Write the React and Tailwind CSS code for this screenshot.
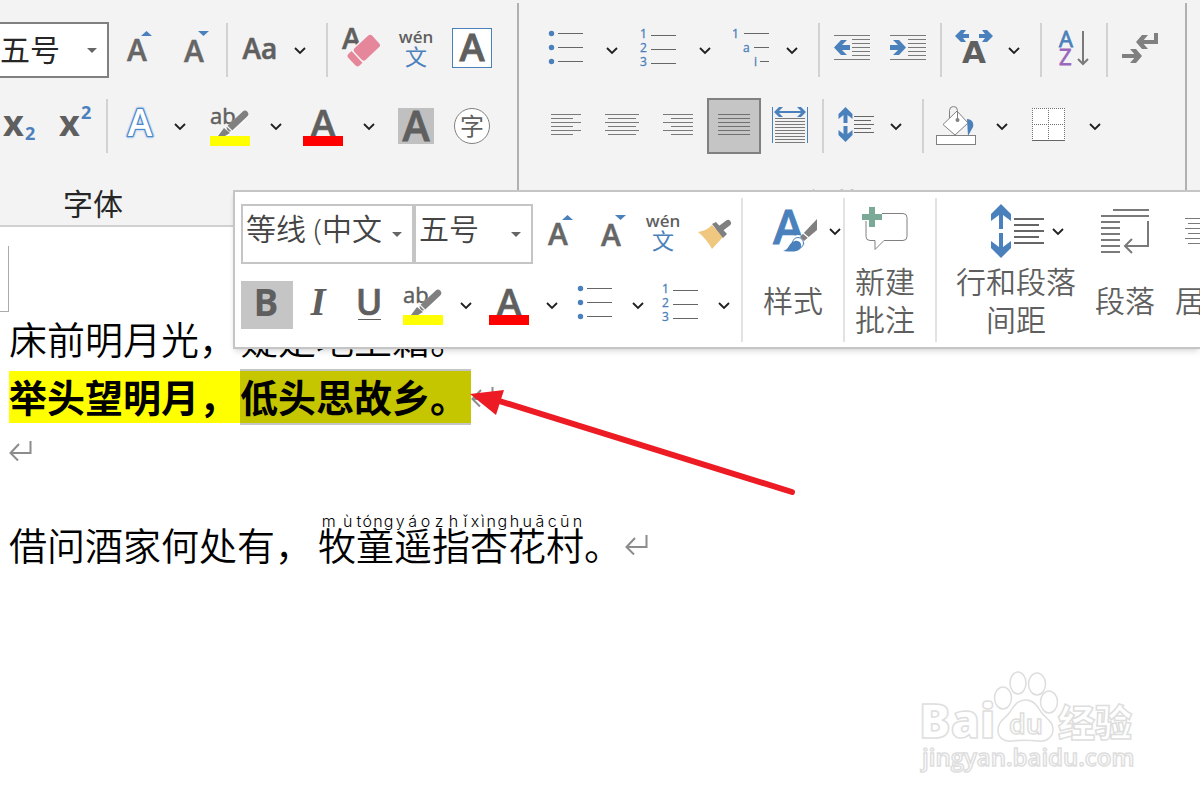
import React, { useState } from "react";

const latin = "'Open Sans', 'Noto Sans', 'Noto Sans CJK SC', sans-serif";

const Icon = ({ w = 40, h = 44, children }) => (
  <svg
    width={w}
    height={h}
    viewBox={`0 0 ${w} ${h}`}
    fill="none"
    className="block shrink-0 overflow-visible"
    fontFamily={latin}
    aria-hidden="true"
  >
    {children}
  </svg>
);

// horizontal strokes, each entry is [x1, x2, y]
const Lines = ({ rows, color = "#7a7a7a", width = 1 }) => (
  <g stroke={color} strokeWidth={width}>
    {rows.map(([a, b, y]) => (
      <line key={y} x1={a} x2={b} y1={y} y2={y} />
    ))}
  </g>
);

const Chevron = () => (
  <svg width="12" height="12" viewBox="0 0 12 12" fill="none" className="block shrink-0" aria-hidden="true">
    <path d="M1 4l5 5 5-5" stroke="#1f1f1f" strokeWidth="1.8" />
  </svg>
);

const Btn = ({ label, className = "", children }) => (
  <button type="button" aria-label={label} title={label} className={`shrink-0 ${className}`}>
    {children}
  </button>
);

const More = ({ label, className = "" }) => (
  <Btn label={label} className={className}>
    <Chevron />
  </Btn>
);

const Sep = ({ className = "" }) => <div className={`w-0.5 h-[54px] shrink-0 bg-[#d2d2d2] ${className}`} />;

const Picker = ({ label, options, className, selectClass }) => {
  const [value, setValue] = useState(options[0]);
  return (
    <div className={`relative shrink-0 ${className}`}>
      <select
        aria-label={label}
        value={value}
        onChange={(e) => setValue(e.target.value)}
        className={`block w-full h-full appearance-none bg-white border-2 text-[30px] leading-9 outline-none ${selectClass}`}
      >
        {options.map((o) => (
          <option key={o}>{o}</option>
        ))}
      </select>
      <svg width="10" height="6" viewBox="0 0 10 6" className="absolute right-3 top-1/2 -mt-0.5 pointer-events-none" aria-hidden="true">
        <path d="M0 0h10L5 5z" fill="#666" />
      </svg>
    </div>
  );
};

const GrowIcon = () => (
  <Icon>
    <text x="8" y="33" fontSize="30" fontWeight="600" fill="#666" stroke="#666" strokeWidth="0.500">A</text>
    <path d="M22 8l5.500-5 5.500 5z" fill="#4a80bb" />
  </Icon>
);

const ShrinkIcon = () => (
  <Icon>
    <text x="8" y="34" fontSize="30" fontWeight="600" fill="#666" stroke="#666" strokeWidth="0.500">A</text>
    <path d="M22 3l5.500 5 5.500-5z" fill="#4a80bb" />
  </Icon>
);

const PinyinIcon = () => (
  <Icon>
    <text x="20" y="15" fontSize="17" fontWeight="600" fill="#5f5f5f" textAnchor="middle">wén</text>
    <text x="20" y="37" fontSize="22" fontWeight="400" fill="#4a80bb" textAnchor="middle">文</text>
  </Icon>
);

const HighlightIcon = () => (
  <Icon>
    <text x="0" y="20" fontSize="22" fontWeight="400" fill="#5f5f5f" stroke="#5f5f5f" strokeWidth="0.500">ab</text>
    <path d="M36 10L10 34" stroke="#fff" strokeWidth="8" opacity="0.600" />
    <path d="M35 10L20 24" stroke="#808080" strokeWidth="6.500" strokeLinecap="round" />
    <path d="M14 24l6 5-5 3H8z" fill="#808080" />
    <path d="M15 20l7 7" stroke="#f3f3f3" strokeWidth="1.200" />
    <rect y="32" width="40" height="10" fill="#ff0" />
  </Icon>
);

const FontColorIcon = () => (
  <Icon>
    <text x="20" y="33" fontSize="38" fontWeight="600" fill="#5f5f5f" stroke="#5f5f5f" strokeWidth="0.600" textAnchor="middle">A</text>
    <rect y="32" width="40" height="10" fill="#f00" />
  </Icon>
);

const BulletIcon = () => (
  <Icon>
    {[5.5, 19.5, 33.5].map((y) => (
      <circle key={y} cx="5.500" cy={y} r="2.700" fill="#4a80bb" />
    ))}
    <Lines color="#666" rows={[[12, 37, 5.5], [12, 37, 19.5], [12, 37, 33.5]]} />
  </Icon>
);

const NumberIcon = () => (
  <Icon>
    <g fontSize="12" fontWeight="400" fill="#4a80bb" stroke="#4a80bb" strokeWidth="0.300">
      <text x="1" y="10">1</text>
      <text x="1" y="24">2</text>
      <text x="1" y="38">3</text>
    </g>
    <Lines color="#666" rows={[[12, 37, 7.5], [12, 37, 21.5], [12, 37, 35.5]]} />
  </Icon>
);

const alignRows = (long, short) => [10.5, 14.5, 18.5, 22.5, 26.5, 30.5].map((y, i) => [...(i % 2 ? short : long), y]);

const ReturnMark = ({ className = "" }) => (
  <svg width="24" height="20" viewBox="0 0 24 20" fill="none" stroke="#8c8c8c" strokeWidth="2" className={`inline-block shrink-0 ${className}`} aria-hidden="true">
    <path d="M21.500 0v12H2M10 3L1.500 12 9 19.500" />
  </svg>
);

const FontGroup = () => (
  <section aria-label="字体" className="w-[519px] shrink-0 border-r-2 border-[#b0b0b0] mt-[3px] pt-[19px]">
    <div className="flex items-center h-14">
      <Picker
        label="字号"
        options={["五号", "小四", "四号"]}
        className="w-[109px] h-full"
        selectClass="border-l-0 border-[#808080] text-[#262626]"
      />
      <Btn label="增大字号" className="ml-2.5"><GrowIcon /></Btn>
      <Btn label="减小字号" className="ml-[17px]"><ShrinkIcon /></Btn>
      <Sep className="ml-2.5" />
      <Btn label="更改大小写" className="ml-3">
        <Icon>
          <text x="20" y="31" fontSize="28" fontWeight="600" fill="#5f5f5f" stroke="#5f5f5f" strokeWidth="0.600" textAnchor="middle">Aa</text>
        </Icon>
      </Btn>
      <More label="更改大小写选项" className="ml-3.5" />
      <Sep className="ml-5" />
      <Btn label="清除格式" className="ml-3">
        <Icon>
          <text x="2" y="21" fontSize="29" fontWeight="600" fill="#5f5f5f" stroke="#5f5f5f" strokeWidth="0.500">A</text>
          <g transform="translate(26.500 20) rotate(-43)" fill="#e5869a">
            <rect x="-13" y="-9.500" width="26" height="19" fill="#f3f3f3" />
            <rect x="-11.500" y="-8" width="24" height="16" rx="3" />
            <path d="M-13-8v16h-4a3 3 0 0 1-3-3V-5a3 3 0 0 1 3-3z" />
          </g>
        </Icon>
      </Btn>
      <Btn label="拼音指南" className="ml-4"><PinyinIcon /></Btn>
      <Btn label="字符边框" className="ml-4">
        <Icon>
          <rect x="0.500" y="0.500" width="39" height="39" fill="#fff" stroke="#4a80bb" />
          <text x="20" y="33" fontSize="38" fontWeight="600" fill="#5f5f5f" stroke="#5f5f5f" strokeWidth="0.800" textAnchor="middle">A</text>
        </Icon>
      </Btn>
    </div>
    <div className="flex items-center h-14 mt-5">
      <Btn label="下标">
        <Icon>
          <text x="3" y="32" fontSize="36" fontWeight="700" fill="#5f5f5f">x</text>
          <text x="25" y="36" fontSize="18" fontWeight="700" fill="#4a80bb">2</text>
        </Icon>
      </Btn>
      <Btn label="上标" className="ml-4">
        <Icon>
          <text x="3" y="32" fontSize="36" fontWeight="700" fill="#5f5f5f">x</text>
          <text x="25" y="15" fontSize="18" fontWeight="700" fill="#4a80bb">2</text>
        </Icon>
      </Btn>
      <Sep className="ml-2.5" />
      <Btn label="文本效果" className="ml-3">
        <Icon>
          <g fontSize="37" fontWeight="600" textAnchor="middle" strokeLinejoin="round">
            <text x="20" y="32" stroke="#cfe0f2" strokeWidth="5">A</text>
            <text x="20" y="32" stroke="#4a86c8" strokeWidth="2.500">A</text>
            <text x="20" y="32" fill="#fff">A</text>
          </g>
        </Icon>
      </Btn>
      <More label="文本效果选项" className="ml-3.5" />
      <Btn label="突出显示" className="ml-6"><HighlightIcon /></Btn>
      <More label="突出显示颜色" className="ml-5" />
      <Btn label="字体颜色" className="ml-[21px]"><FontColorIcon /></Btn>
      <More label="更多字体颜色" className="ml-5" />
      <Btn label="字符底纹" className="ml-[21px]">
        <Icon>
          <rect x="2" y="4" width="36" height="36" fill="#c0c0c0" />
          <text x="20" y="37" fontSize="41" fontWeight="600" fill="#5f5f5f" stroke="#5f5f5f" strokeWidth="0.800" textAnchor="middle">A</text>
        </Icon>
      </Btn>
      <Btn label="带圈字符" className="ml-4">
        <Icon>
          <circle cx="20" cy="22" r="17.500" fill="#fff" stroke="#808080" />
          <text x="20" y="31" fontSize="24" fill="#5f5f5f" textAnchor="middle">字</text>
        </Icon>
      </Btn>
    </div>
    <div className="mt-[30px] pl-[63px] text-[30px] leading-10">字体</div>
  </section>
);

const ParagraphGroup = () => (
  <section aria-label="段落" className="w-[668px] shrink-0 border-r-2 border-[#b0b0b0] mt-[3px] pt-[19px]">
    <div className="flex items-center h-14 pl-[27px]">
      <Btn label="项目符号"><BulletIcon /></Btn>
      <More label="项目符号库" className="ml-5" />
      <Btn label="编号" className="ml-[21px]"><NumberIcon /></Btn>
      <More label="编号库" className="ml-5" />
      <Btn label="多级列表" className="ml-5">
        <Icon>
          <g fontSize="12" fill="#4a80bb" stroke="#4a80bb" strokeWidth="0.300">
            <text x="1" y="10">1</text>
            <text x="12" y="24">a</text>
            <text x="23" y="38">i</text>
          </g>
          <Lines color="#666" rows={[[13, 38, 5.5], [23, 38, 19.5], [29, 38, 33.5]]} />
        </Icon>
      </Btn>
      <More label="多级列表库" className="ml-[15px]" />
      <Sep className="ml-5" />
      <Btn label="减少缩进量" className="ml-3">
        <Icon>
          <Lines rows={[[2, 38, 7.5], [20, 38, 11.5], [20, 38, 15.5], [20, 38, 19.5], [20, 38, 23.5], [20, 38, 27.5], [2, 38, 31.5]]} />
          <path d="M2 19.500L9 12h6l-5 5h8v5h-8l5 5H9z" fill="#4a80bb" />
        </Icon>
      </Btn>
      <Btn label="增加缩进量" className="ml-4">
        <Icon>
          <Lines rows={[[2, 38, 7.5], [20, 38, 11.5], [20, 38, 15.5], [20, 38, 19.5], [20, 38, 23.5], [20, 38, 27.5], [2, 38, 31.5]]} />
          <path d="M18 19.500L11 12H5l5 5H2v5h8l-5 5h6z" fill="#4a80bb" />
        </Icon>
      </Btn>
      <Sep className="ml-3" />
      <Btn label="中文版式" className="ml-3">
        <Icon>
          <path d="M1 8l6-6h5L9 6h6v4H9l3 4H7zM39 8l-6-6h-5l3 4h-6v4h6l-3 4h5z" fill="#4a80bb" />
          <text x="20" y="35" fontSize="31" fontWeight="700" fill="#5f5f5f" textAnchor="middle" fontFamily="'DejaVu Sans', sans-serif">A</text>
        </Icon>
      </Btn>
      <More label="中文版式选项" className="ml-3.5" />
      <Sep className="ml-5" />
      <Btn label="排序" className="ml-3">
        <Icon>
          <text x="5" y="19" fontSize="22" fill="#4a80bb" stroke="#4a80bb" strokeWidth="0.800">A</text>
          <text x="5" y="37" fontSize="22" fill="#9966bb" stroke="#9966bb" strokeWidth="0.800">Z</text>
          <path d="M29 3v32M24 31l5 5 5-5" stroke="#7a7a7a" strokeWidth="2" />
        </Icon>
      </Btn>
      <Sep className="ml-3" />
      <Btn label="显示编辑标记" className="ml-3">
        <Icon>
          <path d="M36 5v9H20M2 28h18" stroke="#808080" strokeWidth="4" />
          <path d="M16 14l6-7h6l-6 7 6 7h-6zM22 28l-6-7h-6l6 7-6 7h6z" fill="#808080" />
        </Icon>
      </Btn>
    </div>
    <div className="flex items-center h-14 mt-5 pl-[27px]">
      <Btn label="左对齐"><Icon><Lines rows={alignRows([5, 35], [5, 27])} /></Icon></Btn>
      <Btn label="居中" className="ml-4"><Icon><Lines rows={alignRows([3, 37], [6, 34])} /></Icon></Btn>
      <Btn label="右对齐" className="ml-4"><Icon><Lines rows={alignRows([5, 35], [13, 35])} /></Icon></Btn>
      <Btn label="两端对齐" className="ml-[9px] flex items-center justify-center w-[54px] h-14 border-2 border-[#808080] bg-[#c5c5c5]">
        <Icon><Lines color="#707070" rows={alignRows([4, 36], [4, 36])} /></Icon>
      </Btn>
      <Btn label="分散对齐" className="ml-[9px]">
        <Icon>
          <path d="M2.500 3v36M37.500 3v36" stroke="#4a80bb" />
          <path d="M6 8h28" stroke="#4a80bb" strokeWidth="2" />
          <path d="M4 8l5-5h4L8 8l5 5H9zM36 8l-5-5h-4l5 5-5 5h4z" fill="#4a80bb" />
          <Lines rows={[14.5, 17.5, 20.5, 23.5, 26.5, 29.5, 32.5, 35.5, 38.5].map((y) => [5, 35, y])} />
        </Icon>
      </Btn>
      <Sep className="ml-3" />
      <Btn label="行和段落间距" className="ml-3">
        <Icon>
          <path d="M9.500 3l7 7v5l-5-4v8h-4v-8l-5 4v-5zM9.500 38l7-7v-5l-5 4v-8h-4v8l-5-4v5z" fill="#4a80bb" />
          <Lines color="#666" rows={[[18, 38, 12.5], [18, 35, 16.5], [18, 38, 20.5], [18, 35, 24.5], [18, 38, 28.5]]} />
        </Icon>
      </Btn>
      <More label="间距选项" className="ml-3.5" />
      <Sep className="ml-5" />
      <Btn label="底纹" className="ml-3">
        <Icon>
          <path d="M31 15c5 0 7 4 6 8l-5 9z" fill="#4a80bb" />
          <path d="M21 7l11 12-13 12L7 20.500z" fill="#fff" stroke="#808080" />
          <path d="M13.500 14V6.500a4 4 0 0 1 8 0V16" stroke="#808080" />
          <circle cx="21.500" cy="16" r="2" fill="#808080" />
          <rect x="0.500" y="31.500" width="39" height="9" fill="#fff" stroke="#808080" />
        </Icon>
      </Btn>
      <More label="底纹颜色" className="ml-5" />
      <Btn label="边框" className="ml-5">
        <Icon>
          <rect x="4" y="4" width="33" height="33" fill="#fff" />
          <path d="M4 4.500h33M4 20.500h33M4.500 4v33M20.500 4v33M36.500 4v33" stroke="#707070" strokeDasharray="1 1" />
          <path d="M4 36.500h33" stroke="#666" />
        </Icon>
      </Btn>
      <More label="边框选项" className="ml-[21px]" />
    </div>
    <div className="mt-[30px] pr-10 text-center text-[30px] leading-10">段落</div>
  </section>
);

const BigButton = ({ icon, lines, className = "", iconClass = "justify-center" }) => (
  <button type="button" className={`shrink-0 pt-[11px] text-[#5f5f5f] ${className}`}>
    <span className={`flex items-center h-14 ${iconClass}`}>{icon}</span>
    <span className="flex flex-col items-center justify-center h-[76px] mt-1 text-[30px] leading-[38px] whitespace-nowrap">
      {lines.map((l) => (
        <span key={l}>{l}</span>
      ))}
    </span>
  </button>
);

const BigSep = () => <div className="w-0.5 h-36 shrink-0 self-center bg-[#e1e1e6]" />;

const MiniToolbar = () => (
  <div
    role="toolbar"
    aria-label="浮动工具栏"
    className="absolute left-[233px] right-0 top-[190px] flex items-start overflow-hidden bg-white border-2 border-r-0 border-[#c5c5c5] shadow-md font-[350]"
  >
    <div className="shrink-0 w-[506px] pl-1.5 pt-3 pb-[18px]">
      <div className="flex items-center">
        <Picker
          label="字体"
          options={["等线 (中文正文)", "宋体", "黑体"]}
          className="w-[173px] h-[60px]"
          selectClass="border-[#c5c5c5] text-[#444] pl-[3px] pr-[31px] pb-2.5"
        />
        <Picker
          label="浮动字号"
          options={["五号", "小四", "四号"]}
          className="w-[119px] h-[60px]"
          selectClass="border-[#c5c5c5] text-[#444] pl-[3px] pb-2.5"
        />
        <Btn label="增大字号" className="ml-[7px]"><GrowIcon /></Btn>
        <Btn label="减小字号" className="ml-[13px]"><ShrinkIcon /></Btn>
        <Btn label="拼音指南" className="ml-2.5"><PinyinIcon /></Btn>
        <Btn label="格式刷" className="ml-3">
          <Icon>
            <path d="M3 20c6-1 10-3 14-7l11 12-11 12C13 30 9 25 3 20z" fill="#efc77f" />
            <path d="M17 12l4-2 11 12-4 4z" fill="#808080" />
            <path d="M25 17l8-6" stroke="#808080" strokeWidth="6" strokeLinecap="round" />
          </Icon>
        </Btn>
      </div>
      <div className="flex items-center h-12 mt-[17px]">
        <Btn label="加粗" className="flex items-center justify-center w-[52px] h-12 bg-[#c5c5c5]">
          <Icon>
            <text x="19" y="33" fontSize="37" fontWeight="700" fill="#5f5f5f" textAnchor="middle">B</text>
          </Icon>
        </Btn>
        <Btn label="倾斜" className="ml-[5px]">
          <Icon>
            <text x="20" y="32" fontSize="39" fontWeight="700" fontStyle="italic" fontFamily="'Liberation Serif', serif" fill="#5f5f5f" textAnchor="middle">I</text>
          </Icon>
        </Btn>
        <Btn label="下划线" className="ml-3">
          <Icon>
            <text x="19" y="32" fontSize="36" fontWeight="600" fill="#5f5f5f" stroke="#5f5f5f" strokeWidth="0.600" textAnchor="middle">U</text>
            <path d="M8 36.500h23" stroke="#5f5f5f" />
          </Icon>
        </Btn>
        <Btn label="突出显示" className="ml-[13px]"><HighlightIcon /></Btn>
        <More label="突出显示颜色" className="ml-[17px]" />
        <Btn label="字体颜色" className="ml-[17px]"><FontColorIcon /></Btn>
        <More label="更多字体颜色" className="ml-[17px]" />
        <Btn label="项目符号" className="ml-[17px]"><BulletIcon /></Btn>
        <More label="项目符号库" className="ml-[17px]" />
        <Btn label="编号" className="ml-[17px]"><NumberIcon /></Btn>
        <More label="编号库" className="ml-[17px]" />
      </div>
    </div>
    <BigSep />
    <BigButton
      className="w-[100px]"
      iconClass="justify-end gap-3 pr-0.5"
      lines={["样式"]}
      icon={
        <>
          <Icon w={44} h={56}>
            <text x="0" y="41" fontSize="47" fontWeight="600" fill="#4a80bb" stroke="#4a80bb" strokeWidth="0.800">A</text>
            <circle cx="25" cy="39" r="7" fill="#fff" />
            <path d="M10 48c6-1 6-9 12-10 5-1 8 4 5 8-3 3-8 3-17 2z" fill="#4a80bb" />
            <circle cx="25" cy="40" r="5.500" stroke="#4a80bb" />
            <path d="M27 34L44 16v11L31 38z" fill="#808080" />
            <path d="M30 30l7 6" stroke="#fff" strokeWidth="1.200" />
          </Icon>
          <Chevron />
        </>
      }
    />
    <BigSep />
    <BigButton
      className="w-[90px] pr-2.5"
      lines={["新建", "批注"]}
      icon={
        <Icon w={46} h={56}>
          <path d="M20 10.500h21a4 4 0 0 1 4 4v19a4 4 0 0 1-4 4H22l-9 9v-9H8a4 4 0 0 1-4-4V18" stroke="#808080" />
          <path d="M7 4h6v7h7v6h-7v7H7v-7H0v-6h7z" fill="#7aa998" />
        </Icon>
      }
    />
    <BigSep />
    <BigButton
      className="w-[158px]"
      iconClass="gap-2 pl-[53px]"
      lines={["行和段落", "间距"]}
      icon={
        <>
          <Icon w={54} h={56}>
            <path d="M11 1l10 10v7l-8-6v14H9V12l-8 6v-7zM11 55l10-10v-7l-8 6V30H9v14l-8-6v7z" fill="#4a80bb" />
            <Lines color="#666" width={2} rows={[[24, 54, 16], [24, 49, 22], [24, 54, 28], [24, 49, 34], [24, 54, 40]]} />
          </Icon>
          <Chevron />
        </>
      }
    />
    <BigButton
      className="w-[60px]"
      lines={["段落"]}
      icon={
        <Icon w={50} h={56}>
          <Lines
            width={2}
            rows={[[13, 49, 7], [1, 49, 13], [1, 20, 19], [1, 20, 25], [1, 20, 31], [1, 20, 37], [1, 20, 43], [1, 20, 49]]}
          />
          <path d="M48 18v25H26M32 36l-7 7 7 7" stroke="#7a7a7a" strokeWidth="2" />
        </Icon>
      }
    />
    <BigButton
      className="w-[60px] ml-5"
      lines={["居中"]}
      icon={
        <Icon h={56}>
          <Lines rows={[15.5, 20.5, 25.5, 30.5, 35.5, 40.5].map((y, i) => (i % 2 ? [3, 37, y] : [0, 40, y]))} />
        </Icon>
      }
    />
  </div>
);

const ruby = [
  ["牧", "mù"],
  ["童", "tóng"],
  ["遥", "yáo"],
  ["指", "zhǐ"],
  ["杏", "xìng"],
  ["花", "huā"],
  ["村", "cūn"],
];

const Watermark = () => (
  <svg
    width="220"
    height="110"
    viewBox="0 0 220 110"
    className="absolute right-[62px] bottom-[22px] overflow-visible"
    fill="#fff"
    stroke="#dedede"
    strokeWidth="1.500"
    fontFamily={latin}
    aria-hidden="true"
  >
    <g transform="translate(2 0)">
      <ellipse cx="83" cy="30" rx="8.500" ry="11" />
      <ellipse cx="98" cy="15" rx="8" ry="11" />
      <ellipse cx="117" cy="16" rx="8.500" ry="11" />
      <ellipse cx="129" cy="34" rx="8.500" ry="11" />
      <path d="M106 32c-8 0-12 5-16 12-4 6-12 9-12 18 0 8 6 12 14 11 9-1 17-1 26 0 9 1 15-4 15-12 0-8-8-11-12-17-4-7-8-12-15-12z" />
      <text x="-1" y="70" fontSize="47" fontWeight="800">Bai</text>
      <text x="106" y="66" fontSize="27" fontWeight="600" textAnchor="middle">du</text>
      <text x="138" y="69" fontSize="37" fontWeight="900" fontFamily="'Noto Sans CJK SC', sans-serif">经验</text>
      <text x="2" y="98" fontSize="24" fontWeight="600">jingyan.baidu.com</text>
    </g>
  </svg>
);

const Document = () => (
  <main className="text-[38px] leading-[52px] font-[350] text-black whitespace-nowrap pt-[19px]">
    <div className="w-[9px] h-[66px] border-r border-b border-[#ababab]" />
    <div className="pl-[9px]">
      <p className="flex pt-px">
        <span className="w-[231px]">床前明月光，</span>
        <span>疑是地上霜。</span>
      </p>
      <p className="flex items-center mt-1 font-bold">
        <span className="w-[231px] bg-[#ffff00]">举头望明月，</span>
        <span className="w-[231px] bg-[#c6c600] border-y-2 border-[#c5c5c5]">低头思故乡。</span>
        <ReturnMark />
      </p>
      <p className="flex items-center h-[52px]">
        <ReturnMark />
      </p>
      <p className="flex items-end mt-9">
        <span className="w-[309px]">借问酒家何处有，</span>
        {ruby.map(([char, pinyin]) => (
          <span key={char} className="flex flex-col w-[38px] pb-1.5">
            <span className="flex justify-around h-3 text-base leading-4 font-['Inter','Noto_Sans',sans-serif]">
              {[...pinyin].map((c, i) => (
                <span key={i}>{c}</span>
              ))}
            </span>
            <span className="leading-10">{char}</span>
          </span>
        ))}
        <span className="w-[41px]">。</span>
        <ReturnMark className="mb-4" />
      </p>
    </div>
  </main>
);

const App = () => (
  <div className="relative min-h-screen overflow-hidden bg-white text-[#262626] font-['Open_Sans','Noto_Sans_CJK_SC',sans-serif]">
    <header className="flex h-[227px] overflow-hidden bg-[#f3f3f3] border-b-2 border-[#d0d0d0]">
      <FontGroup />
      <ParagraphGroup />
    </header>
    <Document />
    <MiniToolbar />
    {/* pointer to the selected half of the line */}
    <svg width="330" height="112" viewBox="0 0 330 112" className="absolute left-[470px] top-[386px] pointer-events-none" aria-hidden="true">
      <path d="M26 14L322 106" stroke="#ed1c24" strokeWidth="6" strokeLinecap="round" />
      <path d="M0 8l34-4-8 25z" fill="#ed1c24" />
    </svg>
    <Watermark />
  </div>
);

export default App;
